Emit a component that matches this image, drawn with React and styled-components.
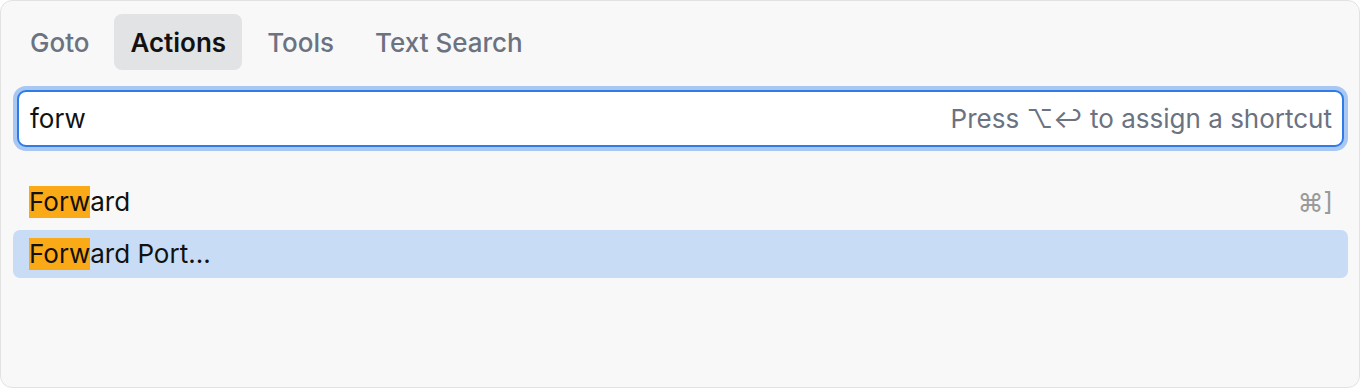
import React from "react";
import styled, { createGlobalStyle } from "styled-components";

const Global = createGlobalStyle`
  html, body { margin: 0; padding: 0; background: #ffffff; }
  body { font-family: Inter, "Noto Sans", "DejaVu Sans", sans-serif; }
  * { box-sizing: border-box; }
`;

const Panel = styled.div`
  width: 1360px;
  height: 388px;
  background: #f8f8f8;
  border: 1px solid #e2e2e2;
  border-radius: 12px;
  padding: 13px 11px 0 12px;
  display: flex;
  flex-direction: column;
`;

const Tabs = styled.div`
  display: flex;
  gap: 9px;
  height: 56px;
  padding-left: 1px;
  align-items: stretch;
`;

const Tab = styled.div`
  display: flex;
  align-items: center;
  padding: 0 16px;
  border-radius: 8px;
  font-size: 26px;
  font-weight: ${(p) => (p.$active ? 600 : 500)};
  color: ${(p) => (p.$active ? "#111111" : "#6b7280")};
  background: ${(p) => (p.$active ? "#e2e3e5" : "transparent")};
`;

const InputWrap = styled.div`
  margin-top: 20px;
  margin-left: 4px;
  margin-right: 4px;
  height: 57px;
  border: 2px solid #2f7ce8;
  border-radius: 9px;
  box-shadow: 0 0 0 4px #a8c7f3;
  background: #ffffff;
  display: flex;
  align-items: center;
  justify-content: space-between;
  padding: 0 10px 0 11px;
`;

const Query = styled.span`
  font-size: 26px;
  color: #111111;
`;

const Hint = styled.span`
  font-size: 26px;
  color: #6b7280;
`;

const List = styled.div`
  margin-top: 31px;
  display: flex;
  flex-direction: column;
  gap: 4px;
`;

const Row = styled.div`
  height: 48px;
  display: flex;
  align-items: center;
  justify-content: space-between;
  padding: 0 15px 0 16px;
  border-radius: 7px;
  background: ${(p) => (p.$selected ? "#c8dcf5" : "transparent")};
  font-size: 26px;
  color: #111111;
`;

const Mark = styled.span`
  display: inline-block;
  background: #f9aa16;
  line-height: 32px;
`;

const Label = styled.span`
  line-height: 32px;
`;

const Shortcut = styled.span`
  font-size: 26px;
  color: #9a9a9a;
`;

const items = [
  { m: "Forw", rest: "ard", sc: "⌘]" },
  { m: "Forw", rest: "ard Port...", selected: true },
];

export default function App() {
  return (
    <>
      <Global />
      <Panel>
        <Tabs>
          <Tab>Goto</Tab>
          <Tab $active>Actions</Tab>
          <Tab>Tools</Tab>
          <Tab>Text Search</Tab>
        </Tabs>
        <InputWrap>
          <Query>forw</Query>
          <Hint>Press ⌥↩ to assign a shortcut</Hint>
        </InputWrap>
        <List>
          {items.map((it, i) => (
            <Row key={i} $selected={it.selected}>
              <Label>
                <Mark>{it.m}</Mark>
                {it.rest}
              </Label>
              {it.sc && <Shortcut>{it.sc}</Shortcut>}
            </Row>
          ))}
        </List>
      </Panel>
    </>
  );
}
